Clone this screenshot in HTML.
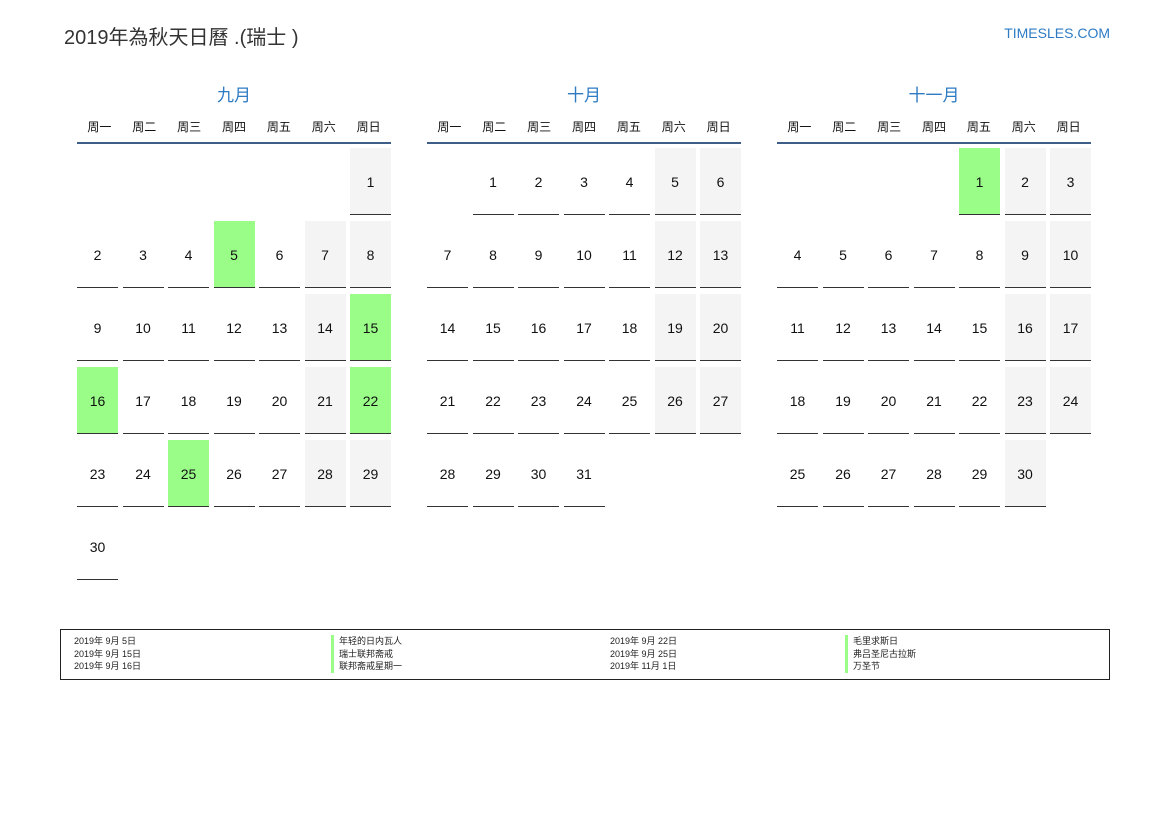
<!DOCTYPE html>
<html><head><meta charset="utf-8"><style>
body{margin:0;width:1169px;height:827px;background:#fff;position:relative;font-family:"Liberation Sans","Noto Sans CJK SC",sans-serif;color:#111;overflow:hidden}
.t{position:absolute;left:64px;top:21px;font-size:20px;color:#333}
.logo{position:absolute;right:59px;top:25px;font-size:14px;color:#2e7bc4}
.m{position:absolute;top:86px;width:314px}
.mt{text-align:center;font-size:17px;color:#2e7bc4;height:24px;line-height:20px}
.wd{display:grid;grid-template-columns:repeat(7,1fr);font-size:12px;text-align:center;margin-top:8px;height:24px;line-height:18px;border-bottom:2px solid #3d5f87}
.g{display:grid;grid-template-columns:repeat(7,41px);column-gap:4.5px;grid-auto-rows:67px;row-gap:6px;margin-top:4px}
.g div{display:flex;align-items:center;justify-content:center;font-size:14px;border-bottom:1px solid #333;box-sizing:border-box;padding-top:2px}
.g .e{border:none}
.g .w{background:#f4f4f4}
.g .h{background:#99fd88}
.lg{position:absolute;left:60px;top:629px;width:1048px;height:49px;border:1px solid #222;font-size:9px;color:#222}
.lg div{position:absolute;line-height:12.5px}
.b{border-left:3px solid #99fd88;padding-left:5px}
</style></head><body>
<div class="t">2019年為秋天日曆 .(瑞士 )</div>
<div class="logo">TIMESLES.COM</div>

<div class="m" style="left:77px"><div class="mt">九月</div>
<div class="wd"><span>周一</span><span>周二</span><span>周三</span><span>周四</span><span>周五</span><span>周六</span><span>周日</span></div>
<div class="g">
<div class="e"></div><div class="e"></div><div class="e"></div><div class="e"></div><div class="e"></div><div class="e"></div><div class="w">1</div>
<div>2</div><div>3</div><div>4</div><div class="h">5</div><div>6</div><div class="w">7</div><div class="w">8</div>
<div>9</div><div>10</div><div>11</div><div>12</div><div>13</div><div class="w">14</div><div class="h">15</div>
<div class="h">16</div><div>17</div><div>18</div><div>19</div><div>20</div><div class="w">21</div><div class="h">22</div>
<div>23</div><div>24</div><div class="h">25</div><div>26</div><div>27</div><div class="w">28</div><div class="w">29</div>
<div>30</div>
</div></div>

<div class="m" style="left:427px"><div class="mt">十月</div>
<div class="wd"><span>周一</span><span>周二</span><span>周三</span><span>周四</span><span>周五</span><span>周六</span><span>周日</span></div>
<div class="g">
<div class="e"></div><div>1</div><div>2</div><div>3</div><div>4</div><div class="w">5</div><div class="w">6</div>
<div>7</div><div>8</div><div>9</div><div>10</div><div>11</div><div class="w">12</div><div class="w">13</div>
<div>14</div><div>15</div><div>16</div><div>17</div><div>18</div><div class="w">19</div><div class="w">20</div>
<div>21</div><div>22</div><div>23</div><div>24</div><div>25</div><div class="w">26</div><div class="w">27</div>
<div>28</div><div>29</div><div>30</div><div>31</div>
</div></div>

<div class="m" style="left:777px"><div class="mt">十一月</div>
<div class="wd"><span>周一</span><span>周二</span><span>周三</span><span>周四</span><span>周五</span><span>周六</span><span>周日</span></div>
<div class="g">
<div class="e"></div><div class="e"></div><div class="e"></div><div class="e"></div><div class="h">1</div><div class="w">2</div><div class="w">3</div>
<div>4</div><div>5</div><div>6</div><div>7</div><div>8</div><div class="w">9</div><div class="w">10</div>
<div>11</div><div>12</div><div>13</div><div>14</div><div>15</div><div class="w">16</div><div class="w">17</div>
<div>18</div><div>19</div><div>20</div><div>21</div><div>22</div><div class="w">23</div><div class="w">24</div>
<div>25</div><div>26</div><div>27</div><div>28</div><div>29</div><div class="w">30</div>
</div></div>

<div class="lg">
<div style="left:13px;top:5px">2019年 9月 5日<br>2019年 9月 15日<br>2019年 9月 16日</div>
<div class="b" style="left:270px;top:5px">年轻的日内瓦人<br>瑞士联邦斋戒<br>联邦斋戒星期一</div>
<div style="left:549px;top:5px">2019年 9月 22日<br>2019年 9月 25日<br>2019年 11月 1日</div>
<div class="b" style="left:784px;top:5px">毛里求斯日<br>弗吕圣尼古拉斯<br>万圣节</div>
</div>
</body></html>
